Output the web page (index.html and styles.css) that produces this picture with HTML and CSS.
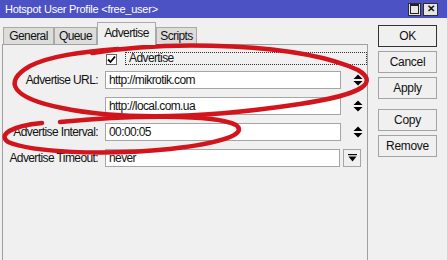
FILE: index.html
```html
<!DOCTYPE html>
<html lang="en">

<head>
    <meta charset="UTF-8">
    <meta name="viewport" content="width=device-width, initial-scale=1.0">
    <title>Hotspot User Profile</title>
    <link rel="stylesheet" href="styles.css">
</head>

<body>

    <div id="window">
        <div id="titlebar">
            <span class="title">Hotspot User Profile &lt;free_user&gt;</span>
            <span class="wbtn"><span class="max-icon"></span></span>
            <span class="wbtn close">&#x2715;</span>
        </div>

        <div id="main">
            <div id="left">
                <div id="tabs">
                    <div class="tab t-general">General</div>
                    <div class="tab t-queue">Queue</div>
                    <div class="tab active t-adv">Advertise</div>
                    <div class="tab t-scripts">Scripts</div>
                </div>

                <div id="panel">
                    <div class="row check-row">
                        <span class="checkbox">
                            <svg width="9" height="9" viewBox="0 0 9 9"><path d="M1 4.5 L3.5 7 L8 1.5" fill="none" stroke="#000" stroke-width="1.8"/></svg>
                        </span>
                        <span class="focus">Advertise</span>
                    </div>

                    <div class="row">
                        <span class="label">Advertise URL:</span>
                        <span class="field">http://mikrotik.com</span>
                        <span class="spin">
                            <svg width="10" height="12" viewBox="0 0 10 12"><path d="M0.5 5 L5 0.5 L9.5 5 Z M0.5 7 L9.5 7 L5 11.5 Z" fill="#000"/></svg>
                        </span>
                    </div>

                    <div class="row">
                        <span class="label"></span>
                        <span class="field">http://local.com.ua</span>
                        <span class="spin">
                            <svg width="10" height="12" viewBox="0 0 10 12"><path d="M0.5 5 L5 0.5 L9.5 5 Z M0.5 7 L9.5 7 L5 11.5 Z" fill="#000"/></svg>
                        </span>
                    </div>

                    <div class="row">
                        <span class="label">Advertise Interval:</span>
                        <span class="field">00:00:05</span>
                        <span class="spin">
                            <svg width="10" height="12" viewBox="0 0 10 12"><path d="M0.5 5 L5 0.5 L9.5 5 Z M0.5 7 L9.5 7 L5 11.5 Z" fill="#000"/></svg>
                        </span>
                    </div>

                    <div class="row">
                        <span class="label">Advertise Timeout:</span>
                        <span class="field short">never</span>
                        <span class="dropbtn">
                            <svg width="9" height="8" viewBox="0 0 9 8"><path d="M0 0.5 H9" stroke="#000" stroke-width="1.4"/><path d="M0.5 2.5 H8.5 L4.5 7.5 Z" fill="#000"/></svg>
                        </span>
                    </div>
                </div>
            </div>

            <div id="buttons">
                <button class="default">OK</button>
                <button>Cancel</button>
                <button>Apply</button>
                <button class="spaced">Copy</button>
                <button>Remove</button>
            </div>
        </div>

        <!-- red marker circles drawn over the screenshot -->
        <svg id="marks" width="447" height="260" viewBox="0 0 447 260">
            <path d="M92 53 C170 40 300 43 358 70 C378 82 366 94 300 104 C220 116 130 122 62 108 C12 98 2 82 30 66 C50 56 80 52 118 49" />
            <path d="M60 122 C130 115 215 114 236 125 C248 134 222 143 170 149 C100 156 32 152 8 142 C-2 135 10 126 42 123" />
        </svg>
    </div>

</body>

</html>
```

FILE: styles.css
```css
body {
    margin: 0;
    padding: 0;
    font-family: 'Liberation Sans', Arial, sans-serif;
    font-size: 12px;
    letter-spacing: -0.6px;
    color: #111;
    background-color: #f0f0f0;
}

#window {
    position: relative;
    width: 447px;
    height: 260px;
    overflow: hidden;
    background-color: #f0f0f0;
}

#titlebar {
    height: 18px;
    background-color: #4c51c3;
    display: flex;
    align-items: center;
    padding-left: 5px;
    padding-right: 9px;
}

#titlebar .title {
    flex: 1;
    color: #fff;
    font-size: 11px;
    letter-spacing: -0.25px;
}

.wbtn {
    width: 13px;
    height: 13px;
    box-sizing: border-box;
    border: 1px solid #2d2d2d;
    background-color: #e6e6e6;
    margin-left: 2px;
    display: flex;
    align-items: center;
    justify-content: center;
}

.max-icon {
    width: 7px;
    height: 7px;
    border: 1px solid #222;
    border-top-width: 2px;
}

.wbtn.close {
    width: 15px;
    font-size: 10px;
    font-weight: bold;
    letter-spacing: 0;
    line-height: 1;
}

#main {
    display: flex;
    padding-left: 2px;
}

#left {
    width: 366px;
    padding-top: 4px;
}

#tabs {
    display: flex;
    align-items: flex-end;
    height: 22px;
    padding-left: 1px;
}

.tab {
    box-sizing: border-box;
    height: 17px;
    border: 1px solid #a9a9a9;
    border-bottom: none;
    background-color: #dcdcdc;
    line-height: 16px;
    text-align: center;
}

.tab.active {
    height: 23px;
    margin-bottom: -1px;
    background-color: #f0f0f0;
    line-height: 20px;
    position: relative;
    z-index: 1;
}

.t-general { width: 51px; }
.t-queue { width: 43px; }
.t-adv { width: 59px; }
.t-scripts { width: 41px; }

#panel {
    box-sizing: border-box;
    height: 300px;
    border: 1px solid #a0a0a0;
    padding-top: 7px;
}

.row {
    display: grid;
    grid-template-columns: 95px 236px 19px;
    column-gap: 7px;
    height: 18px;
    margin-bottom: 8px;
    align-items: center;
}

.check-row {
    display: flex;
    height: 13px;
    margin-bottom: 6px;
    padding-left: 103px;
}

.checkbox {
    box-sizing: border-box;
    width: 11px;
    height: 11px;
    border: 1px solid #666;
    background-color: #fff;
    margin-top: 2px;
    display: flex;
    align-items: center;
    justify-content: center;
}

.focus {
    box-sizing: border-box;
    width: 243px;
    height: 13px;
    margin-left: 1px;
    border: 1px dotted #333;
    padding-left: 3px;
    line-height: 11px;
}

.label {
    text-align: right;
    white-space: nowrap;
}

.field {
    box-sizing: border-box;
    height: 18px;
    border: 1px solid #a5a5a5;
    background-color: #fff;
    padding-left: 3px;
    line-height: 16px;
}

.spin {
    display: flex;
    justify-content: center;
    align-items: center;
}

.row .short {
    width: 235px;
}

.dropbtn {
    box-sizing: border-box;
    width: 18px;
    height: 18px;
    margin-left: -5px;
    border: 1px solid #a5a5a5;
    display: flex;
    align-items: center;
    justify-content: center;
}

#buttons {
    display: flex;
    flex-direction: column;
    margin-left: 10px;
    padding-top: 7px;
}

button {
    box-sizing: border-box;
    width: 59px;
    height: 22px;
    margin-bottom: 4px;
    padding: 0;
    border: 1px solid #a3a3a3;
    background-color: #f0f0f0;
    font-family: 'Liberation Sans', Arial, sans-serif;
    font-size: 12px;
    letter-spacing: -0.3px;
    color: #111;
}

button.default {
    border-color: #333;
}

button.spaced {
    margin-top: 6px;
}

#marks {
    position: absolute;
    left: 0;
    top: 0;
    pointer-events: none;
}

#marks path {
    fill: none;
    stroke: #d2141c;
    stroke-width: 4.5;
    stroke-linecap: round;
}
```
